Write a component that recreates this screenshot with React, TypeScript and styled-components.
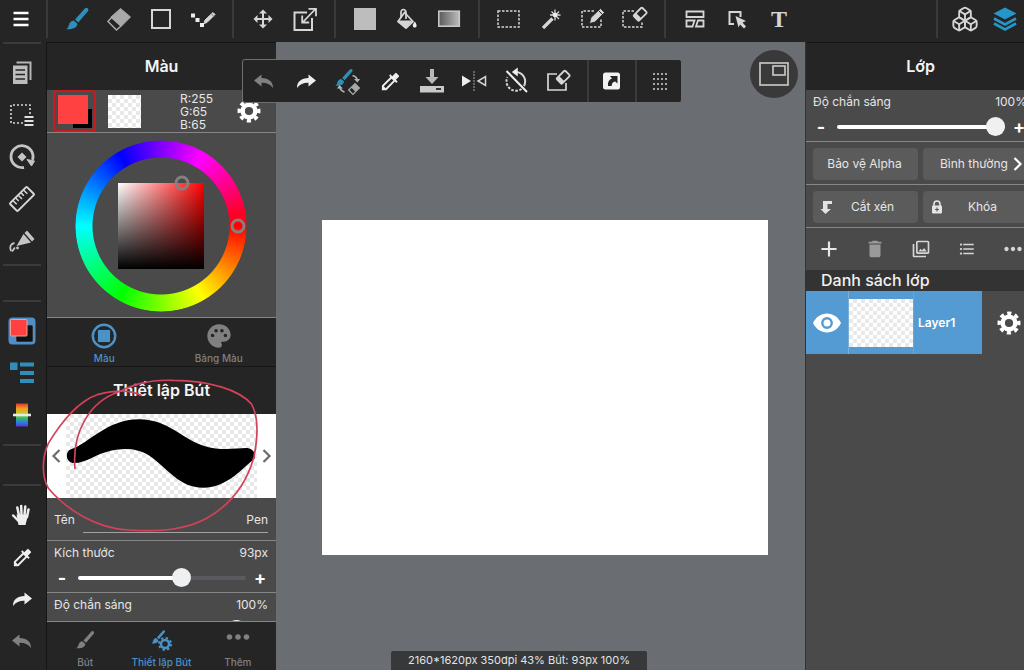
import React, { useState } from "react";
import styled, { createGlobalStyle, css } from "styled-components";
import { Boxes } from "lucide-react";
import {
  MdAdd,
  MdColorize,
  MdDelete,
  MdFormatListBulleted,
  MdMoreHoriz,
  MdOutlinePhotoLibrary,
  MdPalette,
} from "react-icons/md";

const color = {
  bar: "#252525",
  panel: "#4a4a4a",
  workspace: "#6a6d72",
  rule: "#868686",
  divider: "#3a3a3a",
  edge: "#161616",
  icon: "#d6d6d6",
  bright: "#eeeeee",
  dim: "#808080",
  accent: "#2f8fbb",
  select: "#539bd2",
  tab: "#4b92c8",
  red: "#ff4141",
};

const Global = createGlobalStyle`
  *, *::before, *::after { box-sizing: border-box; }
  body {
    margin: 0;
    background: ${color.workspace};
    color: #e6e6e6;
    font-family: Inter, "Noto Sans", sans-serif;
    font-size: 12px;
    line-height: 16px;
  }
  button, input { font: inherit; color: inherit; }
  button { border: 0; padding: 0; background: none; cursor: pointer; }
`;

const checker = css`
  background: repeating-conic-gradient(#e8e8e8 0 25%, #fff 0 50%) 0 0 / 8px 8px;
`;

/* ---------- layout ---------- */

const Page = styled.div`
  display: flex;
  flex-direction: column;
  height: 100vh;
  overflow: hidden;
`;

const TopBar = styled.header`
  display: flex;
  flex: none;
  height: 42px;
  padding-bottom: 4px;
  background: ${color.bar};
`;

const ToolGroup = styled.div<{ $gap?: number; $pad?: string }>`
  display: flex;
  gap: ${(p) => p.$gap ?? 0}px;
  padding: ${(p) => p.$pad ?? "0 8px"};
`;

const MenuSlot = styled.div`
  display: flex;
  width: 46px;
`;

const Spacer = styled.div`
  flex: 1;
`;

const ColumnDivider = styled.span`
  flex: none;
  width: 2px;
  background: ${color.divider};
`;

const ToolButton = styled.button<{ $w?: number; $tone?: string }>`
  display: flex;
  flex: none;
  align-items: center;
  justify-content: center;
  width: ${(p) => p.$w ?? 42}px;
  height: 100%;
  min-height: 38px;
  color: ${(p) => p.$tone ?? color.icon};
`;

const SerifGlyph = styled.span`
  font-family: "Liberation Serif", serif;
  font-size: 24px;
  font-weight: 700;
  line-height: 24px;
`;

const Body = styled.div`
  position: relative;
  display: flex;
  flex: 1;
  min-height: 0;
`;

const Rail = styled.nav`
  display: flex;
  flex: none;
  flex-direction: column;
  width: 47px;
  background: ${color.bar};
  border-right: 1px solid ${color.edge};
`;

const RailGroup = styled.div<{ $end: number }>`
  display: flex;
  flex-direction: column;
  padding: 8px 0 ${(p) => p.$end}px;
`;

const RailButton = styled(ToolButton)`
  width: 44px;
  height: 42px;
`;

const RowDivider = styled.span<{ $after?: number }>`
  flex: none;
  height: 2px;
  margin: 0 5px ${(p) => p.$after ?? 0}px 3px;
  background: ${color.divider};
`;

const SidePanel = styled.aside`
  display: flex;
  flex: none;
  flex-direction: column;
  width: 229px;
  background: ${color.panel};
`;

const RightDock = styled.div`
  flex: none;
  width: 219px;
  overflow: hidden;
  border-left: 1px solid #333;
  background: ${color.panel};
`;

const PanelTitle = styled.h2`
  display: flex;
  flex: none;
  align-items: center;
  justify-content: center;
  height: 48px;
  margin: 0;
  padding-bottom: 2px;
  border-top: 1px solid ${color.edge};
  background: ${color.bar};
  color: #f4f4f4;
  font-size: 16px;
  font-weight: 600;
  line-height: 24px;
`;

/* ---------- colour panel ---------- */

const SwatchRow = styled.div`
  display: flex;
  flex: none;
  align-items: center;
  height: 43px;
  padding: 0 13px 0 6px;
  border-bottom: 1px solid ${color.rule};
`;

const CurrentSwatch = styled.button`
  width: 43px;
  height: 42px;
  border: 2px solid #c91b1f;
  border-radius: 4px;
`;

const ClearSwatch = styled.button`
  width: 33px;
  height: 33px;
  margin-left: 12px;
  ${checker}
`;

const Readout = styled.div`
  flex: 1;
  padding-left: 39px;
  font-size: 12px;
  line-height: 13px;
`;

const GearButton = styled.button`
  display: flex;
  align-items: center;
  color: #fff;
`;

const WheelArea = styled.div`
  display: flex;
  flex: none;
  align-items: center;
  justify-content: center;
  height: 185px;
  padding: 2px 1px 0 0;
  border-bottom: 1px solid ${color.rule};
`;

const Wheel = styled.div`
  position: relative;
  display: flex;
  align-items: center;
  justify-content: center;
  width: 172px;
  height: 172px;
`;

const HueRing = styled.div`
  position: absolute;
  inset: 0;
  border-radius: 50%;
  background: conic-gradient(from 90deg, #f00, #ff0, #0f0, #0ff, #00f, #f0f, #f00);
  mask: radial-gradient(circle closest-side, transparent 68px, #000 69px, #000 85px, transparent 86px);
`;

const ShadeSquare = styled.div`
  width: 86px;
  height: 86px;
  background: linear-gradient(to top, #000, transparent), linear-gradient(to right, #fff, #f00);
`;

const Handle = styled.span`
  position: absolute;
  width: 15px;
  height: 15px;
  border: 3px solid #858080;
  border-radius: 50%;
  transform: translate(-50%, -50%);
`;

const Tabs = styled.div`
  display: flex;
  flex: none;
  height: 48px;
  background: ${color.bar};
`;

const Tab = styled.button<{ $on?: boolean }>`
  display: flex;
  flex: 1;
  flex-direction: column;
  align-items: center;
  justify-content: flex-end;
  gap: 1px;
  padding-bottom: 1px;
  white-space: nowrap;
  color: ${(p) => (p.$on ? color.tab : color.dim)};
  font-size: 10px;
  font-weight: 500;
  line-height: 14px;
`;

const TabIcon = styled.span`
  display: flex;
  flex: 1;
  align-items: center;
  padding-top: 4px;
`;

/* ---------- brush panel ---------- */

const BrushSection = styled.section`
  position: relative;
  display: flex;
  flex: 1;
  flex-direction: column;
  min-height: 0;
`;

const Preview = styled.div`
  position: relative;
  display: flex;
  flex: none;
  align-items: center;
  justify-content: space-between;
  height: 84px;
  padding: 0 3px;
  background: #fff;
  color: #6c6c6c;
`;

const PreviewTile = styled.div`
  flex: 1;
  height: 84px;
  ${checker}
`;

const StrokeArt = styled.svg`
  position: absolute;
  inset: 0;
  width: 100%;
  height: 84px;
`;

const Arrow = styled.button<{ $end?: boolean }>`
  display: flex;
  align-items: center;
  justify-content: ${(p) => (p.$end ? "flex-end" : "flex-start")};
  width: 16px;
  height: 40px;
`;

const Note = styled.svg`
  position: absolute;
  left: -7px;
  top: -6px;
  pointer-events: none;
`;

const SettingsScroll = styled.div`
  flex: 1;
  min-height: 0;
  overflow: hidden;
  border-bottom: 1px solid ${color.rule};
`;

const NameRow = styled.label`
  display: flex;
  height: 43px;
  padding: 10px 8px 0 7px;
  border-bottom: 1px solid ${color.rule};
  line-height: 24px;
`;

const NameInput = styled.input`
  flex: 1;
  min-width: 0;
  height: 25px;
  margin-left: 8px;
  padding: 0 0 2px;
  border: 0;
  border-bottom: 1px solid #a2a2a2;
  background: none;
  text-align: right;
  outline: 0;
`;

const SliderBlock = styled.div`
  height: 52px;
  padding: 4px 8px 0 7px;
  border-bottom: 1px solid ${color.rule};
`;

const SliderHead = styled.div`
  display: flex;
  justify-content: space-between;
`;

const SliderLine = styled.div`
  display: flex;
  align-items: center;
  height: 20px;
  margin-top: 7px;
`;

const Step = styled.button`
  width: 16px;
  color: #fff;
  font-size: 18px;
  font-weight: 700;
  line-height: 20px;
`;

const Range = styled.input<{ $fill: number }>`
  flex: 1;
  min-width: 0;
  height: 20px;
  margin: 0 6px 0 8px;
  appearance: none;
  background: none;
  &::-webkit-slider-runnable-track {
    height: 4px;
    border-radius: 2px;
    background: linear-gradient(to right, #fff ${(p) => p.$fill}%, #5b5b5f ${(p) => p.$fill}%);
  }
  &::-webkit-slider-thumb {
    appearance: none;
    width: 19px;
    height: 19px;
    margin-top: -8px;
    border-radius: 50%;
    background: #eef0f2;
  }
`;

/* ---------- workspace ---------- */

const Workspace = styled.main`
  position: relative;
  display: flex;
  flex: 1;
  align-items: center;
  min-width: 0;
  padding: 63px 37px 0 46px;
  background: ${color.workspace};
`;

const Artboard = styled.div`
  width: 100%;
  aspect-ratio: 446 / 335;
  background: #fff;
`;

const FloatingBar = styled.div`
  position: absolute;
  left: -34px;
  top: 17px;
  z-index: 2;
  display: flex;
  height: 44px;
  border: 1px solid #6f6f6f;
  border-radius: 3px;
  background: ${color.bar};
`;

const NavigatorButton = styled.button`
  position: absolute;
  right: 7px;
  top: 8px;
  display: flex;
  align-items: center;
  justify-content: center;
  width: 48px;
  height: 48px;
  border-radius: 50%;
  background: #393939;
  color: #c4c4c4;
`;

const Status = styled.div`
  position: absolute;
  left: 115px;
  bottom: 0;
  padding: 1px 17px 2px;
  border-radius: 2px 2px 0 0;
  background: #36383a;
  color: #e4e4e4;
  font-size: 11px;
  white-space: nowrap;
`;

/* ---------- layer panel ---------- */

const ButtonRow = styled.div`
  display: grid;
  grid-template-columns: 1fr 1fr;
  gap: 5px;
  padding: 6px 7px 4px;
  border-bottom: 1px solid ${color.rule};
`;

const OptionButton = styled.button<{ $picker?: boolean }>`
  display: flex;
  align-items: center;
  height: 32px;
  padding: ${(p) => (p.$picker ? "0 4px 0 13px" : "0 8px 0 6px")};
  border-radius: 4px;
  background: #5b5b5b;
  white-space: nowrap;
`;

const OptionText = styled.span`
  flex: 1;
  text-align: center;
`;

const LayerTools = styled.div`
  display: flex;
  height: 42px;
`;

const ListTitle = styled.h3`
  height: 21px;
  margin: 0;
  padding-left: 15px;
  background: #333334;
  color: #f0f0f0;
  font-size: 16px;
  font-weight: 500;
  line-height: 21px;
`;

const LayerRow = styled.div`
  display: flex;
  align-items: center;
  height: 63px;
`;

const LayerMain = styled.div`
  display: flex;
  align-items: center;
  width: 176px;
  height: 63px;
  background: ${color.select};
  color: #fff;
`;

const EyeButton = styled.button`
  display: flex;
  align-items: center;
  justify-content: center;
  width: 43px;
  height: 63px;
  border-right: 1px solid #7ab0da;
`;

const Thumb = styled.div`
  width: 64px;
  height: 48px;
  ${checker}
`;

const LayerName = styled.span`
  display: flex;
  align-items: center;
  height: 63px;
  padding-left: 4px;
  border-left: 1px solid #6aa6d6;
  font-weight: 600;
`;

const LayerGear = styled(GearButton)`
  justify-content: center;
  width: 53px;
`;

/* ---------- icons ---------- */

const Ico = ({ children, s = 30 }: { children: React.ReactNode; s?: number }) => (
  <svg width={s} height={s} viewBox="0 0 30 30" fill="none" stroke="currentColor" strokeWidth="2" aria-hidden="true">
    {children}
  </svg>
);

const BrushShape = () => (
  <g fill="currentColor" stroke="none">
    <path d="M25.700 4.300c1.100 1 .8 2.300 0 3.200L16.300 18.400l-3.300-2.900L22.800 4.600c1-1 2.100-1.100 2.900-.3z" />
    <path d="M11.700 16.600l3.500 3c.4 3.600-3.200 6.200-11.200 5.700 2-.9 2.200-2.300 2.900-4.300.9-2.700 2.600-4.200 4.800-4.400z" />
  </g>
);

const EraserSmall = ({ x, y }: { x: number; y: number }) => (
  <g transform={`translate(${x} ${y}) rotate(-45)`}>
    <rect x="-6" y="-3.500" width="12" height="7.500" rx="1" fill={color.bar} strokeWidth="1.800" />
    <path d="M-6-3.500h4v7.500h-4z" fill="currentColor" stroke="none" />
  </g>
);

const Menu = () => (
  <Ico><path d="M7.500 9h15M7.500 15h15M7.500 21h15" stroke="#fff" strokeWidth="2.400" /></Ico>
);
const Eraser = () => (
  <Ico>
    <path d="M16.500 4.500l10 8.500-9 9-10.500-9z" fill="#a9a9a9" stroke="#a9a9a9" strokeWidth="1" />
    <path d="M7.500 13.500L4 17.500l8.500 8.500 4.500-4z" stroke="#a9a9a9" strokeWidth="1.500" />
  </Ico>
);
const Square = () => <Ico><rect x="6" y="6" width="18" height="18" /></Ico>;
const DotPen = () => (
  <Ico>
    <path d="M3 9.500h4v4H3zM7.500 14h4v4h-4zM12 19h4v4h-4z" fill="#eee" stroke="none" />
    <path d="M16 19.500l1-3.500 8-7.500 2 2-8 8z" fill="currentColor" stroke="currentColor" strokeWidth="1" />
    <path d="M23 9.500l3 3" stroke="#777" strokeWidth="1" />
  </Ico>
);
const Move = () => (
  <Ico>
    <path d="M15 8v14M8 15h14" />
    <path d="M15 5.500l4 4h-8zM15 24.500l4-4h-8zM5.500 15l4-4v8zM24.500 15l-4-4v8z" fill="currentColor" stroke="none" />
  </Ico>
);
const Transform = () => (
  <Ico>
    <path d="M17 8.500H4.500v17.500h17.500V14" />
    <path d="M13 18L25 5.500M18.500 4.800H26v7.500M12.200 11.500v7h7" strokeWidth="1.800" />
  </Ico>
);
const FillSquare = () => <Ico><rect x="4" y="4" width="22" height="22" fill="#bdbdbd" stroke="none" /></Ico>;
const Bucket = () => (
  <Ico>
    <path d="M12.500 8.500l8.500 9-7 6.500L6 17.500z" strokeWidth="1.800" strokeLinejoin="round" />
    <path d="M7 16.500h13.500L14 24 6 17.500z" fill="currentColor" stroke="none" />
    <path d="M9 14V8.500c0-4 4.500-4 5 0V15" strokeWidth="1.700" />
    <path d="M22.800 17.500c1.200 2 1.800 3 1.800 4.200a1.900 1.900 0 0 1-3.800 0c0-1.200.7-2.200 2-4.200z" fill="#eee" stroke="none" />
  </Ico>
);
const Gradient = () => (
  <Ico>
    <defs><linearGradient id="ramp"><stop stopColor="#5a5a5a" /><stop offset="1" stopColor="#bcbcbc" /></linearGradient></defs>
    <rect x="4.800" y="7.200" width="20.500" height="15" fill="url(#ramp)" stroke="#c6c6c6" strokeWidth="1.600" />
  </Ico>
);
const Marquee = () => <Ico><rect x="4" y="7" width="21" height="16" strokeWidth="1.500" strokeDasharray="2.500 1.500" /></Ico>;
const Wand = () => (
  <Ico>
    <path d="M7 24l9.500-9.500" strokeWidth="3.200" />
    <path d="M19 5.500v11M14 11h10.500M15.500 7.500l7.500 7.500M23 7.500l-5 5" strokeWidth="1.300" />
    <circle cx="19" cy="11" r="2.300" fill="#eee" stroke="none" />
  </Ico>
);
const SelectPen = () => (
  <Ico>
    <path d="M16 7H4v16h19v-9" strokeWidth="1.500" strokeDasharray="2.500 1.500" />
    <path d="M11.500 19.500l1.500-6L22.500 4.500l4 4-9.500 9.500z" fill="currentColor" stroke={color.bar} strokeWidth=".8" />
    <path d="M20.500 6.500l4 4" stroke={color.bar} strokeWidth="1" />
  </Ico>
);
const SelectEraser = () => (
  <Ico>
    <path d="M14 7H3v16h19v-6" strokeWidth="1.500" strokeDasharray="2.500 1.500" />
    <EraserSmall x={20} y={10} />
  </Ico>
);
const PanelsIcon = () => (
  <Ico>
    <path d="M6.500 7.500h17v5.500h-17zM6.500 16.500h8l-2 6h-6zM18 16.500h5.500v6h-7.500z" strokeWidth="1.800" />
  </Ico>
);
const CursorIcon = () => (
  <Ico>
    <path d="M12 20H7.500V8h11v5" />
    <path d="M13.500 12l10.500 5-3.500 1.500 3.500 4-2 2-4-4-1.500 3z" fill="currentColor" stroke="none" />
  </Ico>
);
const LayersIcon = () => (
  <Ico>
    <path d="M15 3.500l11.500 6L15 15.500 3.500 9.500z" fill="currentColor" stroke="none" />
    <path d="M4 14.500l11 6 11-6M4 19.500l11 6 11-6" strokeWidth="2.600" />
  </Ico>
);
const UndoIcon = () => (
  <Ico><path d="M12.500 8.500L5 14.500l7.500 6v-3.700c4.500-.2 8.500 1.200 11.500 5.200.2-6.500-4.500-9.700-11.500-10z" fill="currentColor" stroke="none" /></Ico>
);
const RedoIcon = () => (
  <Ico><path d="M17.500 8.500L25 14.500l-7.500 6v-3.700C13 16.600 9 18 6 22c-.2-6.500 4.500-9.700 11.500-10z" fill="currentColor" stroke="none" /></Ico>
);
const SwapBrush = () => (
  <Ico>
    <g transform="translate(-1 0) scale(.78)" color={color.accent}><BrushShape /></g>
    <path d="M19.500 9.500q4 1 4.500 4M11.500 26q-3.500-1-4.500-4" stroke="#b5b5b5" strokeWidth="1.600" />
    <path d="M21 13h6l-2.500 3.500zM4 22.500h6l-3.500-3.500z" fill="#b5b5b5" stroke="none" />
    <g transform="translate(21 23) rotate(-45)" stroke="#a8a8a8">
      <rect x="-4.500" y="-3" width="9" height="6" strokeWidth="1.300" />
      <path d="M-1-3h5.500v6H-1z" fill="#a8a8a8" stroke="none" />
    </g>
  </Ico>
);
const Save = () => (
  <Ico>
    <path d="M13 3h4v8h4.500L15 18 8.500 11H13z" fill="#b9b9b9" stroke="none" />
    <path d="M3 20h24v6.500H3z" fill="#c9c9c9" stroke="none" />
    <path d="M19 23h5" stroke={color.bar} strokeWidth="1.800" />
  </Ico>
);
const Flip = () => (
  <Ico>
    <path d="M3 9.500l9 5.500-9 5.500z" fill="#eee" stroke="none" />
    <path d="M15 5v20" stroke="#888" strokeWidth="1.300" strokeDasharray="2 1" />
    <path d="M26.500 10.500v9L19 15z" strokeWidth="1.500" />
  </Ico>
);
const RotateOff = () => (
  <Ico>
    <path d="M15 6a9.500 9.500 0 0 1 8 14" />
    <path d="M20.500 23a9.500 9.500 0 0 1-14-12" strokeDasharray="2.500 1.500" />
    <path d="M12 6l4-3v6z" fill="#eee" stroke="#eee" strokeWidth="1.500" />
    <path d="M5.500 5l20.500 21" stroke="#eee" />
  </Ico>
);
const EraseFrame = () => (
  <Ico>
    <path d="M14 8H5v16h18v-7" strokeWidth="1.700" />
    <EraserSmall x={20} y={11} />
  </Ico>
);
const LinkBox = () => (
  <Ico>
    <rect x="6" y="6.500" width="17" height="17" rx="2.500" fill="#f2f2f2" stroke="none" />
    <path d="M11 20c-.5-4 1-6.500 4-7.500l-2-2.500h7.500v7.500l-2.300-2c-2.500.5-3.500 2-3.500 4.500z" fill={color.bar} stroke="none" />
  </Ico>
);
const DotGrid = () => (
  <Ico>
    <g fill="#a6a6a6" stroke="none">
      {[0, 1, 2, 3].map((r) => [0, 1, 2, 3].map((c) => <rect key={`${r}${c}`} x={8 + c * 4} y={7 + r * 5} width="2" height="2" />))}
    </g>
  </Ico>
);
const NavigatorIcon = () => (
  <Ico>
    <rect x="1" y="4" width="28" height="22" strokeWidth="1.700" />
    <rect x="14" y="7" width="12" height="9" strokeWidth="1.700" />
  </Ico>
);
const Docs = () => (
  <Ico>
    <path d="M9.500 4.500h14V22" stroke="#b5b5b5" />
    <path d="M6 7.500h14.500V26H6z" fill="#bdbdbd" stroke="none" />
    <path d="M8.500 12h9.500M8.500 16.500h9.500M8.500 21h9.500" stroke={color.bar} strokeWidth="1.300" />
  </Ico>
);
const SelectList = () => (
  <Ico>
    <path d="M16 23H4V5h19v9" strokeDasharray="2 2" strokeWidth="1.600" />
    <path d="M17.500 17h9M17.500 21h9M17.500 25h9" stroke="#e0e0e0" />
  </Ico>
);
const Rotate = () => (
  <Ico>
    <path d="M17 25.500a11 11 0 1 1 8.500-7.500" stroke="#c4c4c4" strokeWidth="2.800" />
    <path d="M20 17.500l7.500 1.500-3 5z" fill="#c4c4c4" stroke="#c4c4c4" strokeWidth="1" />
    <path d="M15 10.500l4.500 4.500-4.500 4.500-4.500-4.500z" fill="#c4c4c4" stroke="none" />
  </Ico>
);
const Ruler = () => (
  <Ico>
    <g transform="rotate(-45 15 15)">
      <rect x="3" y="9.500" width="24" height="11" rx="1" />
      <path d="M7.500 10v5M11.300 10v4M15 10v5M18.700 10v4M22.500 10v5" strokeWidth="1.500" />
    </g>
  </Ico>
);
const Nib = () => (
  <Ico>
    <path d="M20 4.500l7.500 8.500-2.500 2.500L17.500 7zM16.500 8l7.500 8.500-14.500 3.500z" fill="#c4c4c4" stroke="none" />
    <path d="M4 25c-2-4 0-7.500 3.500-8M8 21.500l-3 4" strokeWidth="1.800" stroke="#c4c4c4" />
    <circle cx="10.500" cy="22" r="1.400" fill="#c4c4c4" stroke="none" />
  </Ico>
);
const ColorPair = () => (
  <Ico>
    <rect x="1.500" y="1.500" width="27" height="27" rx="4" fill="#4f8fc7" stroke="none" />
    <rect x="9.500" y="9.500" width="16" height="16" rx="1" fill="#111" stroke="#333" strokeWidth="1" />
    <rect x="3.500" y="3.500" width="16.500" height="16.500" rx="1" fill={color.red} stroke="#e7a0a0" strokeWidth="1" />
  </Ico>
);
const PropList = () => (
  <Ico>
    <path d="M3 4.500h7.500v7.500H3zM13 4.500h14v4H13zM13 13h14v4H13zM13 21h14v4H13z" fill="currentColor" stroke="none" />
  </Ico>
);
const Spectrum = () => (
  <Ico>
    <defs>
      <linearGradient id="hues" x2="0" y2="1">
        <stop stopColor="#e3342f" /><stop offset=".22" stopColor="#f0a020" /><stop offset=".45" stopColor="#b9cf2a" />
        <stop offset=".65" stopColor="#2fb56d" /><stop offset=".82" stopColor="#2b7fe0" /><stop offset="1" stopColor="#5a35d8" />
      </linearGradient>
    </defs>
    <rect x="9" y="3.500" width="12" height="23" fill="url(#hues)" stroke="none" />
    <path d="M6 15h18" stroke="#e8e8e8" strokeWidth="2.600" />
  </Ico>
);
const Hand = () => (
  <Ico>
    <path d="M9.500 14.500h11.700l-2.700 10.500H11.500z" fill="currentColor" stroke="none" />
    <path d="M20 17l1.500-7.500M17.500 15l.8-8.500M14.500 15l-.3-9M12 15.500l-1.700-8M12 21.500l-5.800-6" strokeWidth="2.500" strokeLinecap="round" />
  </Ico>
);
const Gear = () => (
  <Ico s={28}>
    <circle cx="15" cy="15" r="6.800" strokeWidth="4.800" />
    <circle cx="15" cy="15" r="10.500" strokeWidth="3.600" strokeDasharray="4.400 3.847" transform="rotate(-12 15 15)" />
  </Ico>
);
const Eye = () => (
  <Ico>
    <path d="M1 15C4 9 9 5.500 15 5.500S26 9 29 15c-3 6-8 9.500-14 9.500S4 21 1 15z" fill="currentColor" stroke="none" />
    <circle cx="15" cy="15" r="4.700" stroke={color.select} strokeWidth="2.400" />
  </Ico>
);
const ColorTabIcon = () => (
  <Ico s={28}>
    <circle cx="15" cy="15" r="12" strokeWidth="2.600" />
    <rect x="8.500" y="8.500" width="13" height="13" fill="currentColor" stroke="none" />
  </Ico>
);
const BrushGear = () => (
  <Ico s={24}>
    <g transform="translate(0 0) scale(.76)"><BrushShape /></g>
    <circle cx="20" cy="20" r="5" strokeWidth="3" />
    <circle cx="20" cy="20" r="7.500" strokeWidth="2.500" strokeDasharray="3 2.890" />
  </Ico>
);
const ClipIcon = () => (
  <svg width="16" height="16" viewBox="0 0 16 16" fill="#e2e2e2" aria-hidden="true">
    <path d="M4 2H13v3H8.500v5H12l-5.500 5L1.500 10H4z" />
  </svg>
);
const LockIcon = () => (
  <svg width="16" height="14" viewBox="0 0 16 14" fill="none" stroke="#e6e6e6" strokeWidth="1.600" aria-hidden="true">
    <path d="M5 6V4a3 3 0 0 1 6 0v2" />
    <rect x="3" y="5.500" width="10" height="8" rx="1" fill="#e6e6e6" stroke="none" />
    <path d="M8 7.500v4M6 9.500h4" stroke="#5b5b5b" strokeWidth="1.200" />
  </svg>
);
const Chevron = ({ left = false, c = "currentColor" }: { left?: boolean; c?: string }) => (
  <svg width="12" height="16" viewBox="0 0 12 16" fill="none" stroke={c} strokeWidth="2.200" aria-hidden="true">
    <path d={left ? "M9.500 2L3.500 8l6 6" : "M2.500 2l6 6-6 6"} />
  </svg>
);

/* ---------- pieces ---------- */

function Slider({ label, unit, initial, max = 100 }: { label: string; unit: string; initial: number; max?: number }) {
  const [value, setValue] = useState(initial);
  const id = React.useId();
  const clamp = (n: number) => setValue(Math.max(0, Math.min(max, n)));
  return (
    <SliderBlock>
      <SliderHead>
        <label htmlFor={id}>{label}</label>
        <span>{value}{unit}</span>
      </SliderHead>
      <SliderLine>
        <Step aria-label={`${label} giảm`} onClick={() => clamp(value - 1)}>-</Step>
        <Range
          id={id}
          type="range"
          max={max}
          value={value}
          $fill={(value / max) * 100}
          onChange={(e) => clamp(Number(e.target.value))}
        />
        <Step aria-label={`${label} tăng`} onClick={() => clamp(value + 1)}>+</Step>
      </SliderLine>
    </SliderBlock>
  );
}

type Tool = [string, React.ReactNode, string?];

const topTools: Tool[][] = [
  [["Bút", <Ico><BrushShape /></Ico>, color.accent], ["Tẩy", <Eraser />], ["Hình", <Square />], ["Chấm", <DotPen />]],
  [["Di chuyển", <Move />], ["Biến đổi", <Transform />]],
  [["Tô", <FillSquare />], ["Đổ màu", <Bucket />], ["Chuyển sắc", <Gradient />]],
  [["Chọn", <Marquee />], ["Đũa thần", <Wand />], ["Bút chọn", <SelectPen />], ["Tẩy chọn", <SelectEraser />]],
  [["Khung", <PanelsIcon />], ["Thao tác", <CursorIcon />], ["Văn bản", <SerifGlyph>T</SerifGlyph>]],
];

const floatTools: Tool[] = [
  ["Hoàn tác", <UndoIcon />, color.dim],
  ["Làm lại", <RedoIcon />, color.bright],
  ["Đổi bút", <SwapBrush />],
  ["Lấy màu", <MdColorize size={23} />, color.bright],
  ["Lưu", <Save />],
  ["Lật", <Flip />],
  ["Bỏ xoay", <RotateOff />],
  ["Xóa", <EraseFrame />],
];

const railTools: Tool[][] = [
  [["Tài liệu", <Docs />], ["Vùng chọn", <SelectList />], ["Xoay", <Rotate />], ["Thước", <Ruler />], ["Ngòi", <Nib />]],
  [["Màu", <ColorPair />], ["Thuộc tính", <PropList />, color.accent], ["Phổ màu", <Spectrum />]],
  [
    ["Tay", <Hand />, color.bright],
    ["Hút màu", <MdColorize size={23} />, color.bright],
    ["Làm lại", <RedoIcon />, color.bright],
    ["Hoàn tác", <UndoIcon />, color.dim],
  ],
];

const railSpacing = [{ end: 2, after: 34 }, { end: 8, after: 38 }, { end: 0, after: 0 }];

const layerTools: Tool[] = [
  ["Thêm lớp", <MdAdd size={26} />, "#e6e6e6"],
  ["Xóa lớp", <MdDelete size={22} />, "#9a9a9a"],
  ["Ảnh", <MdOutlinePhotoLibrary size={20} />],
  ["Danh sách", <MdFormatListBulleted size={18} />],
  ["Khác", <MdMoreHoriz size={26} />],
];

export default function App() {
  const [name, setName] = useState("Pen");
  return (
    <Page>
      <Global />
      <TopBar>
        <MenuSlot><ToolButton aria-label="Menu"><Menu /></ToolButton></MenuSlot>
        {topTools.map((group, i) => (
          <React.Fragment key={i}>
            <ColumnDivider />
            <ToolGroup>
              {group.map(([label, icon, tone]) => (
                <ToolButton key={label} aria-label={label} $tone={tone}>{icon}</ToolButton>
              ))}
            </ToolGroup>
          </React.Fragment>
        ))}
        <Spacer />
        <ColumnDivider />
        <ToolGroup $gap={2} $pad="0 0 0 8px">
          <ToolButton $w={38} aria-label="Vật liệu"><Boxes size={28} strokeWidth={1.600} /></ToolButton>
          <ToolButton $w={38} $tone="#2596c8" aria-label="Lớp"><LayersIcon /></ToolButton>
        </ToolGroup>
      </TopBar>

      <Body>
        <Rail>
          <RowDivider />
          {railTools.map((group, i) => (
            <React.Fragment key={i}>
              {i > 0 && <RowDivider />}
              <RailGroup $end={railSpacing[i].end}>
                {group.map(([label, icon, tone]) => (
                  <RailButton key={label} aria-label={label} $w={46} $tone={tone}>{icon}</RailButton>
                ))}
              </RailGroup>
              {i < 2 && <RowDivider $after={railSpacing[i].after} />}
            </React.Fragment>
          ))}
        </Rail>

        <SidePanel>
          <PanelTitle>Màu</PanelTitle>
          <SwatchRow>
            <CurrentSwatch aria-label="Màu hiện tại">
              <svg width="39" height="38" viewBox="0 0 39 38" aria-hidden="true">
                <path d="M18 17h19v19H18z" fill="#000" />
                <path d="M3 3h30v29H3z" fill={color.red} />
              </svg>
            </CurrentSwatch>
            <ClearSwatch aria-label="Trong suốt" />
            <Readout>
              <div>R:255</div>
              <div>G:65</div>
              <div>B:65</div>
            </Readout>
            <GearButton aria-label="Cài đặt màu"><Gear /></GearButton>
          </SwatchRow>
          <WheelArea>
            <Wheel>
              <HueRing />
              <ShadeSquare />
              <Handle style={{ left: "62%", top: "25%" }} />
              <Handle style={{ left: "95%", top: "50%" }} />
            </Wheel>
          </WheelArea>
          <Tabs>
            <Tab $on><TabIcon><ColorTabIcon /></TabIcon>Màu</Tab>
            <Tab><TabIcon><MdPalette size={28} /></TabIcon>Bảng Màu</Tab>
          </Tabs>

          <BrushSection>
            <PanelTitle>Thiết lập Bút</PanelTitle>
            <Preview>
              <Arrow aria-label="Trước"><Chevron left /></Arrow>
              <PreviewTile />
              <StrokeArt viewBox="21 162 687 252" preserveAspectRatio="none" aria-hidden="true">
                <path d="M95 267C145 252 200 178 298 178C385 178 430 240 490 257C550 275 590 263 622 264C640 266 648 282 643 297C610 320 565 383 490 383C415 383 385 325 325 285C270 252 200 270 155 294C135 303 115 311 98 309C75 304 75 272 95 267Z" />
              </StrokeArt>
              <Arrow $end aria-label="Sau"><Chevron /></Arrow>
            </Preview>
            <SettingsScroll>
              <NameRow>
                Tên
                <NameInput value={name} onChange={(e) => setName(e.target.value)} />
              </NameRow>
              <Slider label="Kích thước" unit="px" initial={93} max={147} />
              <Slider label="Độ chắn sáng" unit="%" initial={100} />
            </SettingsScroll>
            <Tabs>
              <Tab><TabIcon><Ico s={24}><BrushShape /></Ico></TabIcon>Bút</Tab>
              <Tab $on><TabIcon><BrushGear /></TabIcon>Thiết lập Bút</Tab>
              <Tab><TabIcon><MdMoreHoriz size={34} /></TabIcon>Thêm</Tab>
            </Tabs>
            <Note width="240" height="180" viewBox="0 0 720 540" fill="none" stroke="#d2425a" strokeWidth="5" aria-hidden="true">
              <path d="M305 107C270 88 220 92 175 103C110 125 62 190 25 250C5 295 5 350 25 385C80 450 170 505 265 510C370 516 440 508 500 475C570 435 620 370 642 290C655 225 655 170 635 133C600 90 510 62 400 61C310 58 265 82 235 96C150 125 95 215 105 327" />
            </Note>
          </BrushSection>
        </SidePanel>

        <Workspace>
          <Artboard />
          <FloatingBar>
            <ToolGroup $pad="0 8px 0 0">
              {floatTools.map(([label, icon, tone]) => (
                <ToolButton key={label} aria-label={label} $tone={tone}>{icon}</ToolButton>
              ))}
            </ToolGroup>
            <ColumnDivider />
            <ToolGroup $pad="0 2px"><ToolButton aria-label="Mở"><LinkBox /></ToolButton></ToolGroup>
            <ColumnDivider />
            <ToolGroup $pad="0 0 0 2px"><ToolButton aria-label="Kéo thanh"><DotGrid /></ToolButton></ToolGroup>
          </FloatingBar>
          <NavigatorButton aria-label="Điều hướng"><NavigatorIcon /></NavigatorButton>
          <Status>2160*1620px 350dpi 43% Bút: 93px 100%</Status>
        </Workspace>

        <RightDock>
          <SidePanel>
            <PanelTitle>Lớp</PanelTitle>
            <Slider label="Độ chắn sáng" unit="%" initial={100} />
            <ButtonRow>
              <OptionButton><OptionText>Bảo vệ Alpha</OptionText></OptionButton>
              <OptionButton $picker><OptionText>Bình thường</OptionText><Chevron c="#fff" /></OptionButton>
            </ButtonRow>
            <ButtonRow>
              <OptionButton><ClipIcon /><OptionText>Cắt xén</OptionText></OptionButton>
              <OptionButton><LockIcon /><OptionText>Khóa</OptionText></OptionButton>
            </ButtonRow>
            <LayerTools>
              {layerTools.map(([label, icon, tone]) => (
                <ToolButton key={label} aria-label={label} $w={46} $tone={tone}>{icon}</ToolButton>
              ))}
            </LayerTools>
            <ListTitle>Danh sách lớp</ListTitle>
            <LayerRow>
              <LayerMain>
                <EyeButton aria-label="Ẩn hiện lớp"><Eye /></EyeButton>
                <Thumb />
                <LayerName>Layer1</LayerName>
              </LayerMain>
              <LayerGear aria-label="Cài đặt lớp"><Gear /></LayerGear>
            </LayerRow>
          </SidePanel>
        </RightDock>
      </Body>
    </Page>
  );
}
